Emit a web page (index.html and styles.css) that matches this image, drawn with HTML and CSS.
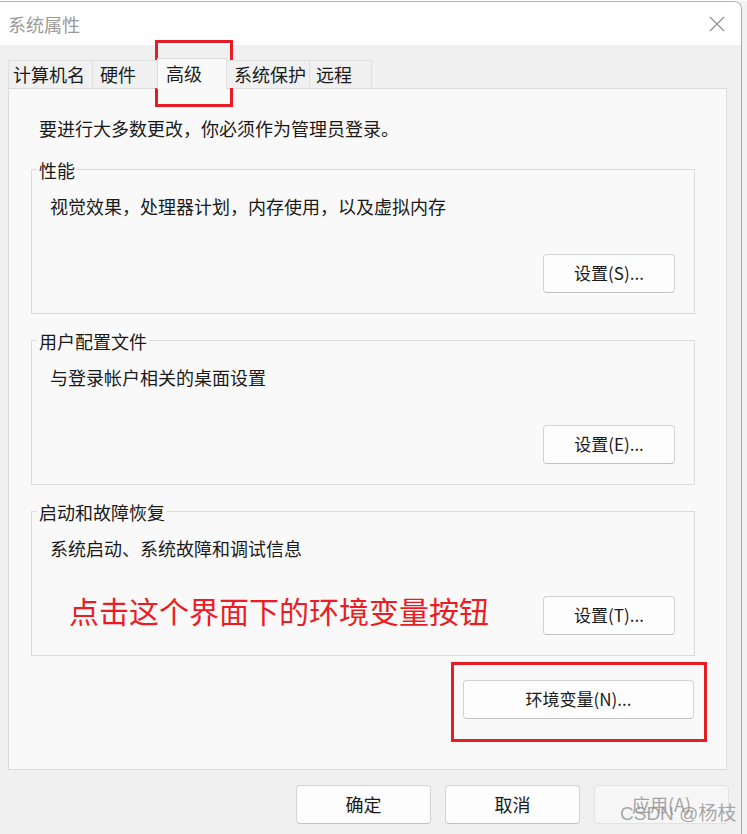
FILE: index.html
```html
<!DOCTYPE html>
<html lang="zh-CN">
<head>
<meta charset="utf-8">
<title>系统属性</title>
<link rel="stylesheet" href="styles.css">
</head>
<body>
<div class="desk">
  <div class="window">
    <div class="titlebar">
      <span class="title">系统属性</span>
      <svg class="close" width="16" height="16" viewBox="0 0 16 16" aria-hidden="true">
        <path d="M1 1 L15 15 M15 1 L1 15" stroke="#8f8f8f" stroke-width="1.2" fill="none"/>
      </svg>
    </div>
    <div class="client">
      <div class="tabs">
        <div class="tab t1">计算机名</div>
        <div class="tab t2">硬件</div>
        <div class="tab t3 active">高级</div>
        <div class="tab t4">系统保护</div>
        <div class="tab t5">远程</div>
      </div>
      <div class="panel">
        <p class="notice">要进行大多数更改，你必须作为管理员登录。</p>

        <div class="group">
          <div class="group-label">性能</div>
          <p class="group-desc">视觉效果，处理器计划，内存使用，以及虚拟内存</p>
          <div class="group-row">
            <button class="btn">设置(S)...</button>
          </div>
        </div>

        <div class="group">
          <div class="group-label">用户配置文件</div>
          <p class="group-desc">与登录帐户相关的桌面设置</p>
          <div class="group-row">
            <button class="btn">设置(E)...</button>
          </div>
        </div>

        <div class="group">
          <div class="group-label">启动和故障恢复</div>
          <p class="group-desc">系统启动、系统故障和调试信息</p>
          <div class="group-row split">
            <span class="hint">点击这个界面下的环境变量按钮</span>
            <button class="btn">设置(T)...</button>
          </div>
        </div>

        <div class="env-row">
          <button class="btn env">环境变量(N)...</button>
        </div>
      </div>
      <div class="footer">
        <button class="btn foot">确定</button>
        <button class="btn foot">取消</button>
        <button class="btn foot disabled">应用(A)</button>
      </div>
    </div>
  </div>
  <div class="mark mark-tab"></div>
  <div class="mark mark-env"></div>
  <div class="watermark">CSDN @杨枝</div>
</div>
</body>
</html>
```

FILE: styles.css
```css
* {
  box-sizing: border-box;
}

html, body {
  margin: 0;
  padding: 0;
}

body {
  background: #f2f2f2;
  font-family: "Noto Sans CJK SC", "Noto Sans", "Liberation Sans", sans-serif;
  color: #1a1a1a;
  overflow: hidden;
}

.desk {
  position: relative;
  width: 747px;
  height: 834px;
  padding-top: 1px;
  overflow: hidden;
  background: linear-gradient(#ffffff 0 1px, #f2f2f2 1px);
}

.window {
  width: 742px;
  height: 833px;
  border-top: 1px solid #b4b4b4;
  border-right: 1px solid #a9a9a9;
  border-top-right-radius: 8px;
  background: #f0f0f0;
  overflow: hidden;
}

.titlebar {
  height: 43px;
  background: #ffffff;
  display: flex;
  align-items: center;
  justify-content: space-between;
  padding: 0 16px 0 8px;
}

.title {
  font-size: 18px;
  line-height: 24px;
  color: #9a9a9a;
}

.close {
  display: block;
}

.client {
  background: #f0f0f0;
}

.tabs {
  display: flex;
  align-items: flex-end;
  height: 30px;
  margin-top: 13px;
  padding-left: 8px;
  position: relative;
  z-index: 1;
}

.tab {
  height: 28px;
  line-height: 27px;
  font-size: 18px;
  padding-left: 6px;
  border: 1px solid #e0e0e0;
  border-bottom: none;
  margin-right: -1px;
  background: #f0f0f0;
  white-space: nowrap;
  color: #1a1a1a;
}

.t1 { width: 85px; padding-left: 4px; }
.t2 { width: 66px; padding-left: 7px; }
.t3 { width: 70px; padding-left: 8px; }
.t4 { width: 84px; padding-left: 7px; }
.t5 { width: 63px; padding-left: 6px; }

.tab.active {
  height: 31px;
  line-height: 29px;
  margin-bottom: -1px;
  background: #f9f9f9;
  border-color: #dcdcdc;
}

.panel {
  margin-left: 8px;
  width: 719px;
  background: #f9f9f9;
  border: 1px solid #dcdcdc;
  padding: 27px 31px 50px 22px;
}

.notice {
  margin: 0 0 0 8px;
  font-size: 18px;
  line-height: 24px;
}

.group {
  margin-top: 29px;
  border: 1px solid #dcdcdc;
  padding: 0 19px 20px 0;
}

.group + .group {
  margin-top: 26px;
}

.group-label {
  width: fit-content;
  margin: -11px 0 0 5px;
  padding: 0 2px;
  height: 22px;
  line-height: 22px;
  font-size: 18px;
  background: #f9f9f9;
}

.group-desc {
  margin: 13px 0 0 18px;
  font-size: 18px;
  line-height: 24px;
}

.group-row {
  margin-top: 36px;
  display: flex;
  justify-content: flex-end;
  align-items: flex-start;
  height: 39px;
}

.group-row.split {
  justify-content: space-between;
}

.hint {
  margin-left: 37px;
  margin-top: -5px;
  font-size: 30px;
  line-height: 39px;
  color: #ec1c24;
  white-space: nowrap;
}

.btn {
  font-family: "Noto Sans CJK SC", "Noto Sans", "Liberation Sans", sans-serif;
  font-size: 17px;
  line-height: 20px;
  color: #1a1a1a;
  width: 132px;
  height: 39px;
  padding: 0 0 2px;
  background: #fdfdfd;
  border: 1px solid #d3d3d3;
  border-bottom-color: #c2c2c2;
  border-radius: 4px;
}

.env-row {
  margin-top: 24px;
  display: flex;
  justify-content: flex-end;
  padding-right: 1px;
  height: 39px;
}

.btn.env {
  width: 231px;
}

.footer {
  margin-top: 15px;
  display: flex;
  justify-content: flex-end;
  gap: 14px;
  padding-right: 12px;
}

.btn.foot {
  width: 135px;
  font-size: 18px;
}

.btn.disabled {
  color: #a3a3a3;
  background: #f6f6f6;
  border-color: #e3e3e3;
}

.mark {
  position: absolute;
  border: 3px solid #e81c24;
}

.mark-tab {
  left: 155px;
  top: 40px;
  width: 78px;
  height: 67px;
}

.mark-env {
  left: 451px;
  top: 662px;
  width: 256px;
  height: 80px;
}

.watermark {
  position: absolute;
  left: 620px;
  top: 801px;
  font-family: "Liberation Sans", "Noto Sans CJK SC", sans-serif;
  font-size: 19px;
  line-height: 26px;
  color: rgba(140, 140, 140, 0.75);
  white-space: nowrap;
}
```
